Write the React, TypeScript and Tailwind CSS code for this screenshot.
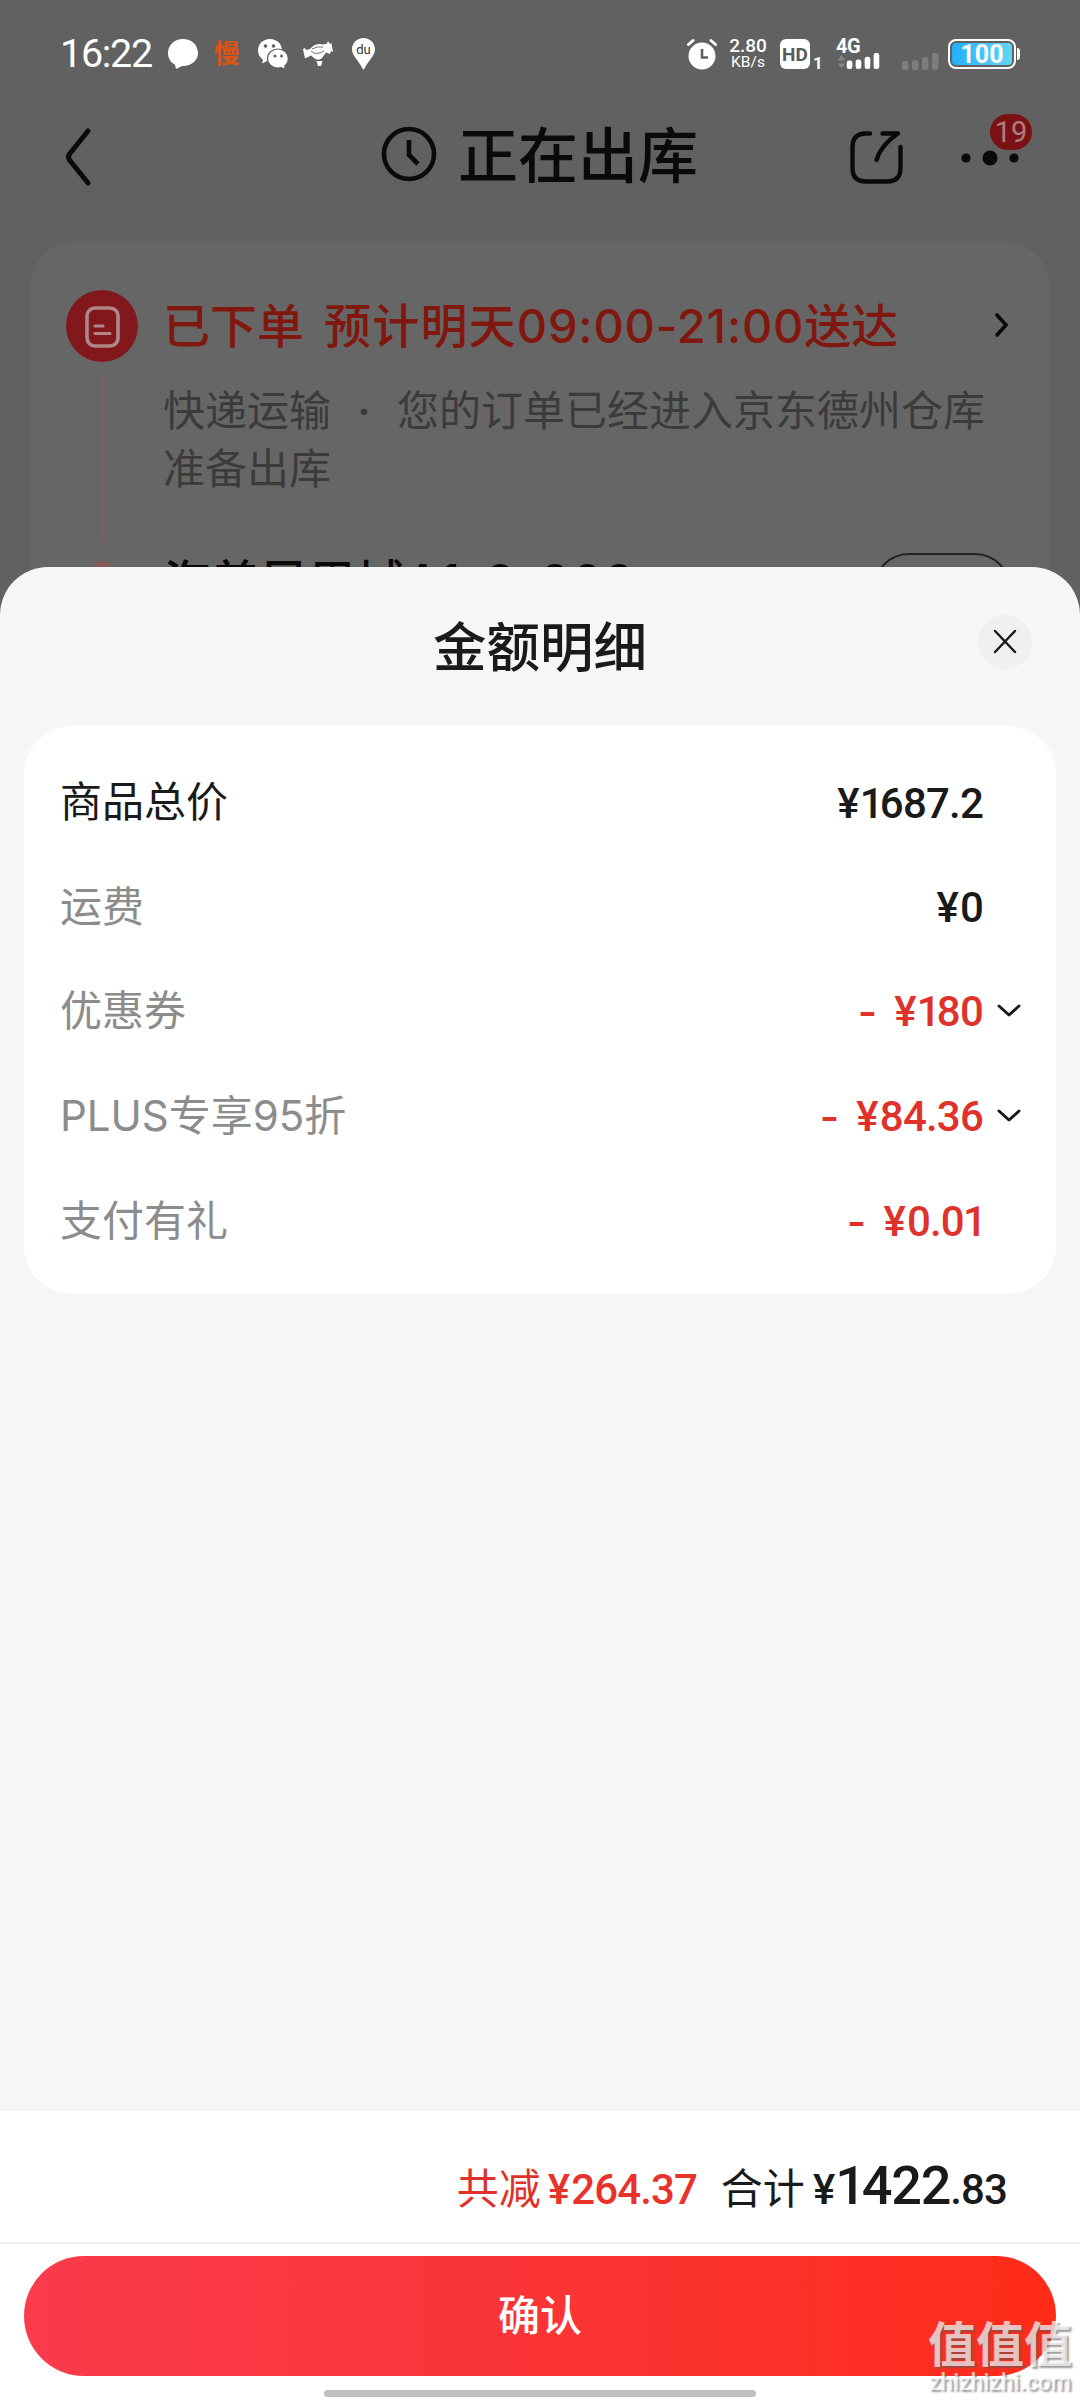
import React from "react";

const cjk = "font-['Roboto','Noto_Sans_CJK_SC',sans-serif]";

function StatusBar() {
  return (
    <div className="flex h-[108px] items-center pl-[60px] pr-[60px] text-white">
      <div className="w-[92px] text-[39.5px] leading-none font-normal tracking-[-1.3px] whitespace-nowrap">16:22</div>
      <svg className="ml-4" width="30" height="32" viewBox="0 0 30 32">
        <path d="M15 1C6.500 1 0 7.200 0 15c0 5.200 2.800 9.500 7 11.800L8 31l6-3C23 28.500 30 22.700 30 15 30 7 23.500 1 15 1Z" fill="#fff" />
      </svg>
      <span className="ml-[16px] w-[28px] text-[26px] leading-none font-bold text-[#dc5415]">慢</span>
      <svg className="ml-4" width="30" height="32" viewBox="0 0 30 32">
        <path d="M12 1C5 1 0 6 0 12.500c0 3.800 1.800 7 5 9.200L4 25.500l5-2.500 3 .5C19 23 24 18 24 12.500 24 6 19 1 12 1Z" fill="#fff" />
        <path d="M20 11c-6 0-10.500 4.200-10.500 9.500S14 30 20 30l3-.4 4.500 2-.8-3.600c2.300-1.800 3.600-4.500 3.600-7.500C30.300 15.200 26 11 20 11Z" fill="#fff" stroke="#616161" strokeWidth="1.200" />
        <g fill="#616161"><circle cx="7.500" cy="8" r="1.800" /><circle cx="15.500" cy="8" r="1.800" /><circle cx="17" cy="18" r="1.500" /><circle cx="23.500" cy="18" r="1.500" /></g>
      </svg>
      <svg className="ml-[15px]" width="30" height="32" viewBox="0 0 30 32">
        <path d="M0 11l2-1 1 2 4-1 3-3q5-3 10-1.500l4-1 1-2.500 2 3 1.500-1L30 14l-2-1-1 3-4-1.500-4 5.500-2 1.500h-4L8 17.500l-2 1-4 2Z" fill="#fff" />
        <path d="M13.500 23h6l-1.500 5h-3Z" fill="#fff" />
        <path d="M8 13q5 5 13 0M9 11q5-3 11-2" fill="none" stroke="#616161" strokeWidth="0.900" />
      </svg>
      <div className="relative ml-[19px] h-8 w-[23px]">
        <svg width="23" height="32" viewBox="0 0 23 32"><path d="M11.500 0C5 0 0 5 0 11.300 0 18 7 23 10.500 30.500q1 2 2 0C16 23 23 18 23 11.300 23 5 18 0 11.500 0Z" fill="#fff" /></svg>
        <span className="absolute inset-x-0 top-[5px] text-center text-[13px] leading-none text-[#333]">du</span>
      </div>
      <div className="ml-auto flex items-center">
        <svg width="30" height="32" viewBox="0 0 30 32">
          <circle cx="15" cy="18" r="13.500" fill="#fff" />
          <path d="M1.500 6.500L6 2.500M28.500 6.500L24 2.500" stroke="#fff" strokeWidth="3" strokeLinecap="round" />
          <path d="M15 11v8.500h6" fill="none" stroke="#616161" strokeWidth="2.600" />
        </svg>
        <div className="ml-[12px] flex w-[38px] flex-col items-center font-medium whitespace-nowrap">
          <span className="text-[19px] leading-[17px]">2.80</span>
          <span className="text-[15.5px] leading-[17px] font-normal">KB/s</span>
        </div>
        <div className="ml-[13px] flex h-[30px] w-[30px] items-center justify-center rounded-[6px] bg-white text-[19px] leading-none font-bold text-[#5a5a5a]">HD</div>
        <span className="ml-[3px] w-[8px] self-end text-[17px] leading-[15px] font-bold">1</span>
        <div className="ml-[15px] flex h-[32px] w-[45px] flex-col">
          <span className="text-[20px] leading-[17px] font-bold tracking-[-0.5px]">4G</span>
          <svg width="45" height="18" viewBox="0 0 45 18" className="-mt-[2px]">
            <path d="M4.500 2l4 6h-8ZM4.500 16l-4-5h8Z" fill="#858585" />
            <g fill="#fff"><rect x="10" y="8" width="6" height="9" rx="2.500" /><rect x="19.500" y="7" width="6" height="10" rx="2.500" /><rect x="29" y="4" width="6" height="13" rx="2.500" /><rect x="38.500" y="0" width="6" height="17" rx="2.500" /></g>
          </svg>
        </div>
        <svg className="ml-[21px] self-end" width="37" height="18" viewBox="0 0 37 18">
          <g fill="#7d7d7d"><rect x="0" y="8" width="6.500" height="9" rx="2.500" /><rect x="10" y="7" width="6.500" height="10" rx="2.500" /><rect x="20" y="4" width="6.500" height="13" rx="2.500" /><rect x="30" y="0" width="6.500" height="17" rx="2.500" /></g>
        </svg>
        <div className="ml-[9px] flex h-[30px] w-[68px] items-center justify-center rounded-[8px] border-2 border-white p-[2px]">
          <div className="flex h-full w-full items-center justify-center rounded-[4px] bg-gradient-to-r from-[#1fb0fa] to-[#62d5f2] text-[25px] leading-none font-bold">100</div>
        </div>
        <div className="ml-px h-3 w-[3px] rounded-r bg-white" />
      </div>
    </div>
  );
}

function NavBar() {
  return (
    <div className="flex h-[134px] pl-[64px]">
      <svg className="mt-[18px]" width="30" height="62" viewBox="0 0 30 62">
        <path d="M24 5L5.500 28q-2 3 0 6L24 57" fill="none" stroke="#0a0a0a" strokeWidth="5" strokeLinecap="round" strokeLinejoin="round" />
      </svg>
      <svg className="mt-[18px] ml-[287px]" width="56" height="56" viewBox="0 0 56 56">
        <circle cx="28" cy="28" r="25" fill="none" stroke="#0a0a0a" strokeWidth="4.600" />
        <path d="M28 14v15l9 9" fill="none" stroke="#0a0a0a" strokeWidth="4.600" />
      </svg>
      <h1 className="mt-[4px] ml-[21px] w-[250px] text-[60px] leading-[92px] font-medium text-[#0a0a0a]">正在出库</h1>
      <svg className="mt-[20px] ml-[140px]" width="58" height="58" viewBox="0 0 58 58">
        <path d="M22 5.500H18Q4.500 5.500 4.500 19V40Q4.500 53.500 18 53.500H39Q52.500 53.500 52.500 40V19M34.500 5.500H50Q33 17 28.500 32" fill="none" stroke="#0a0a0a" strokeWidth="4.400" strokeLinecap="round" strokeLinejoin="round" />
      </svg>
      <div className="relative mt-[6px] ml-[54px] h-[54px] w-[72px]">
        <svg className="absolute top-[36px] left-0" width="60" height="18" viewBox="0 0 60 18">
          <circle cx="6" cy="8" r="4.600" fill="#0a0a0a" /><circle cx="30" cy="8" r="7.500" fill="#0a0a0a" /><circle cx="54" cy="8" r="4.600" fill="#0a0a0a" />
        </svg>
        <span className="absolute top-0 left-[30px] h-[36px] w-[42px] rounded-full bg-[#7a1215] text-center text-[29px] leading-[37px] text-[#b07b7c]">19</span>
      </div>
    </div>
  );
}

function OrderCard() {
  return (
    <div className="mx-[30px] flex h-[400px] rounded-t-[45px] bg-[#666666]">
      <div className="ml-[36px] flex w-[72px] flex-col items-center pt-[48px]">
        <svg width="72" height="72" viewBox="0 0 72 72">
          <circle cx="36" cy="36" r="36" fill="#82181b" />
          <rect x="21" y="18" width="31" height="38" rx="8" fill="none" stroke="#b18687" strokeWidth="3.600" />
          <path d="M29 36h8M29 43.500h15" stroke="#b18687" strokeWidth="3.200" strokeLinecap="round" />
        </svg>
        <div className="mt-[12px] h-[167px] w-[2px] shrink-0 bg-[#865d5c]" />
        <div className="mt-[20px] h-5 w-5 shrink-0 rounded-full bg-[#8a5a5a]" />
      </div>
      <div className="ml-[25px] flex-1">
        <div className="mt-[48px] flex h-[72px] items-center text-[#80180f]">
          <span className="text-[47px] leading-none font-medium whitespace-nowrap">已下单<span className="ml-[20px] tracking-[1.2px]">预计明天</span><span className="font-['Inter'] tracking-[0.8px]">09:00-21:00</span>送达</span>
          <svg className="ml-auto mr-[39px] mb-[2px]" width="18" height="28" viewBox="0 0 18 28"><path d="M4 4l9 10-9 10" fill="none" stroke="#0a0a0a" strokeWidth="3.600" strokeLinecap="round" /></svg>
        </div>
        <p className="mt-[21px] text-[42px] leading-[58px] whitespace-pre text-[#3b3b3b]">快递运输<span className="inline-block w-[66px] text-center font-bold">·</span>您的订单已经进入京东德州仓库<br />准备出库</p>
        <div className="mt-[54px] flex items-start">
          <span className="text-[48px] leading-[60px] font-medium tracking-[0.5px] whitespace-nowrap text-[#0a0a0a]">海普凤凰城<span className="font-['Inter'] text-[49px] tracking-[1.3px]">A1-9-202</span></span>
          <div className="mr-[39px] ml-auto h-[72px] w-[138px] rounded-full border-2 border-[#222]" />
        </div>
      </div>
    </div>
  );
}

// The digit "1" is set tighter than the other figures.
function Money({ text }: { text: string }) {
  return (
    <span>
      {text.split(/(1|¥)/).map((part, i) => {
        if (part === "1") return <span key={i} className="-ml-[1px] -mr-[3px]">1</span>;
        if (part === "¥") return <span key={i} className="mr-[2px]">¥</span>;
        return part;
      })}
    </span>
  );
}

type Row = { label: string; value: string; minus?: boolean; arrow?: boolean; strong?: boolean };

const rows: Row[] = [
  { label: "商品总价", value: "¥1687.2", strong: true },
  { label: "运费", value: "¥0" },
  { label: "优惠券", value: "¥180", minus: true, arrow: true },
  { label: "PLUS专享95折", value: "¥84.36", minus: true, arrow: true },
  { label: "支付有礼", value: "¥0.01", minus: true },
];

function AmountRow({ row }: { row: Row }) {
  return (
    <div className="flex h-[104.6px] items-center pr-[32px] pl-[36px] text-[42px] leading-none">
      <span className={row.strong ? "mt-[2px] text-[#1a1a1a]" : "font-['Inter','Noto_Sans_CJK_SC',sans-serif] text-[#8c8c8c]"}>{row.label}</span>
      <span className={row.minus ? "mt-[2px] ml-auto flex font-medium tracking-[-0.8px] text-[#e0322a]" : "mt-[3px] ml-auto flex font-medium tracking-[-0.8px] text-[#1a1a1a]"}>
        {row.minus && <span className="mr-[18px] font-['Inter']">-</span>}
        <Money text={row.value} />
      </span>
      <span className="flex w-[41px] justify-end">
        {row.arrow && (
          <svg width="30" height="20" viewBox="0 0 30 20"><path d="M5 5l10 9 10-9" fill="none" stroke="#1a1a1a" strokeWidth="3" strokeLinecap="round" strokeLinejoin="round" /></svg>
        )}
      </span>
    </div>
  );
}

function Sheet() {
  return (
    <div className="relative flex h-[1833px] flex-col rounded-t-[48px] bg-[#f6f6f6]">
      <div className="relative flex h-[159px] justify-center">
        <h2 className="mt-[42px] text-[53.500px] leading-[80px] font-medium text-[#1a1a1a]">金额明细</h2>
        <button className="absolute top-[48px] right-[48px] flex h-[54px] w-[54px] items-center justify-center rounded-full bg-[#f0f0f0]">
          <svg width="28" height="28" viewBox="0 0 28 28"><path d="M4 3l20 21M24 3L4 24" stroke="#1a1a1a" strokeWidth="2.500" strokeLinecap="round" /></svg>
        </button>
      </div>
      <div className="mx-[24px] h-[568px] rounded-[48px] bg-white pt-[24px]">
        {rows.map((row) => <AmountRow key={row.label} row={row} />)}
      </div>
      <div className="mt-auto flex h-[289px] flex-col bg-white">
        <div className="flex h-[133px] items-baseline justify-end border-b-2 border-[#ececec] pt-[45px] pr-[73px] text-[42px] leading-[60px] whitespace-nowrap text-[#1a1a1a]">
          <span className="text-[#e0322a]">共减</span>
          <span className="ml-[7px] font-medium tracking-[-0.9px] text-[#e8322a]"><Money text="¥264.37" /></span>
          <span className="ml-[24px]">合计</span>
          <span className="ml-[8px] font-medium tracking-[-0.9px]"><Money text="¥" /><span className="text-[54px] tracking-[-1.2px]"><Money text="1422" /></span>.83</span>
        </div>
        <button className="mx-[24px] mt-[12px] h-[120px] rounded-full bg-gradient-to-r from-[#f93b4c] via-[#fa3435] to-[#ff2b17] text-[42px] font-medium text-white">确认</button>
        <div className="mx-auto mt-[14px] h-[7px] w-[432px] rounded-full bg-[#bfbfbf]" />
      </div>
      <div className="absolute right-[9px] bottom-[5px] flex w-[142px] flex-col items-center whitespace-nowrap text-white/70 [text-shadow:2px_2px_2px_rgba(90,90,90,0.6)]">
        <span className="text-[48px] leading-[51px] font-bold">值值值</span>
        <span className="text-[23px] leading-[24px] font-medium">zhizhizhi.com</span>
      </div>
    </div>
  );
}

export default function App() {
  return (
    <div className={`${cjk} h-[2400px] w-[1080px] overflow-hidden bg-[#616161]`}>
      <StatusBar />
      <NavBar />
      <div className="h-[325px]"><OrderCard /></div>
      <Sheet />
    </div>
  );
}
